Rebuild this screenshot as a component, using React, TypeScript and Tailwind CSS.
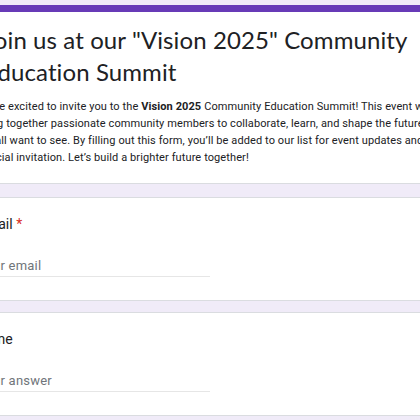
import React from "react";

export default function App() {
  return (
    <div className="w-[420px] h-[420px] overflow-hidden bg-[#f0ebf8]" style={{ fontFamily: "Roboto, 'Liberation Sans', sans-serif" }}>
      <div className="ml-[-44px] w-[560px] pt-[5px] flex flex-col">
        {/* Header card */}
        <div className="rounded-lg overflow-hidden border border-[#dadce0] border-t-0 bg-white">
          <div className="h-[7px] bg-[#673ab7]" />
          <div className="pl-[21px] pt-[12px] pb-[17px]">
            <div
              className="ml-[6px] text-[24px] leading-[32px] text-[#202124] whitespace-nowrap tracking-[0.1px]"
              style={{ fontFamily: "Lato, Roboto, sans-serif" }}
            >
              Join us at our "Vision 2025" Community
              <br />
              Education Summit
            </div>
            <div className="mt-[10px] text-[11px] leading-[17px] text-[#202124] tracking-[0.1px] whitespace-nowrap">
              <div>
                We’re excited to invite you to the <span className="font-bold">Vision 2025</span> Community Education Summit! This event will
              </div>
              <div>bring together passionate community members to collaborate, learn, and shape the future</div>
              <div>we all want to see. By filling out this form, you’ll be added to our list for event updates and a</div>
              <div>special invitation. Let’s build a brighter future together!</div>
            </div>
          </div>
        </div>

        {/* Email card */}
        <div className="mt-[13px] rounded-lg border border-[#dadce0] bg-white pl-[21px] pt-[16px] pb-[23px]">
          <div className="text-[14px] leading-[20px] text-[#202124]">
            Email <span className="text-[#d93025]">*</span>
          </div>
          <div className="mt-[21px] w-[232px] h-[22px] border-b border-[#e6e6e6] flex items-center text-[13px] text-[#70757a] tracking-[0.2px]">
            Your email
          </div>
        </div>

        {/* Phone card */}
        <div className="mt-[11px] rounded-lg border border-[#dadce0] bg-white pl-[21px] pt-[16px] pb-[23px]">
          <div className="ml-[-5px] text-[14px] leading-[20px] text-[#202124]">Phone</div>
          <div className="mt-[21px] w-[232px] h-[22px] border-b border-[#e6e6e6] flex items-center text-[13px] text-[#70757a] tracking-[0.2px]">
            Your answer
          </div>
        </div>
      </div>
    </div>
  );
}
